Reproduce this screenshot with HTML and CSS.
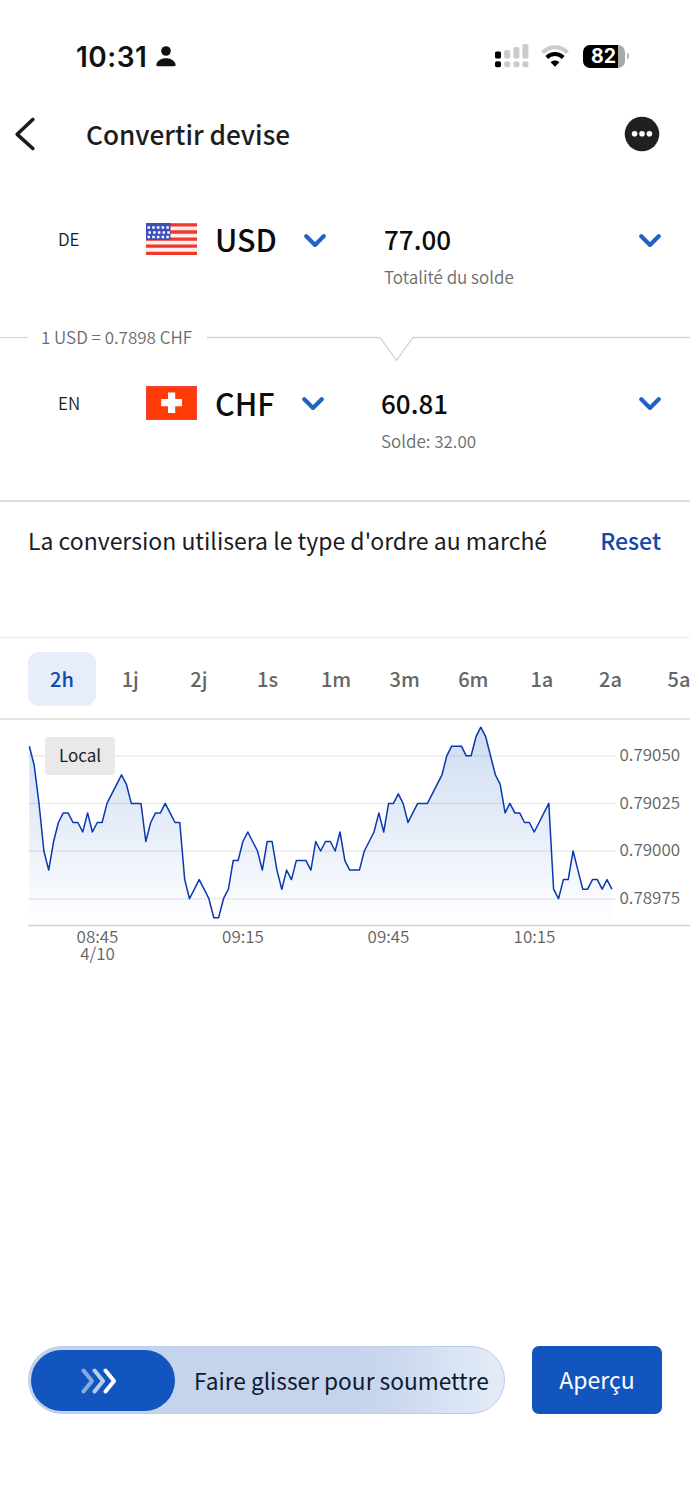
FILE: index.html
```html
<!DOCTYPE html>
<html lang="fr">
<head>
  <meta charset="UTF-8">
  <meta name="viewport" content="width=device-width, initial-scale=1.0">
  <title>Convertir devise</title>
  <link rel="stylesheet" href="styles.css">
</head>
<body>
  <div class="status-bar">
    <span class="time">10:31</span>
    <svg class="person" width="20" height="21" viewBox="0 0 20 21">
      <circle cx="10" cy="5" r="4.8"/>
      <path d="M.4 18.300C1 15 5 12.300 10 12.300s9 2.700 9.600 6c.2 1.200-.3 1.900-1.400 1.900H1.800C.7 20.200.2 19.500.4 18.300z"/>
    </svg>
    <svg class="signal" width="34" height="24" viewBox="0 0 34 24">
      <g fill="#000">
        <rect x="0" y="7.5" width="6" height="7" rx="1.6"/>
        <rect x="0" y="17.2" width="6" height="6" rx="1.8"/>
      </g>
      <g fill="#cbcbcb">
        <rect x="9.2" y="6" width="6" height="8.5" rx="1.6"/>
        <rect x="18.4" y="3" width="6" height="11.5" rx="1.6"/>
        <rect x="27.4" y="0" width="6" height="14.5" rx="1.6"/>
        <rect x="9.2" y="17.2" width="6" height="6" rx="2"/>
        <rect x="18.4" y="17.2" width="6" height="6" rx="2"/>
        <rect x="27.4" y="17.2" width="6" height="6" rx="2"/>
      </g>
    </svg>
    <svg class="wifi" width="28" height="22" viewBox="0 0 28 22">
      <path d="M1.5 7.6C8.5 .4 19.5 .4 26.5 7.6" fill="none" stroke="#cbcbcb" stroke-width="3.9"/>
      <path d="M5.800 12.500c4.600-4.600 11.800-4.600 16.400 0" fill="none" stroke="#000" stroke-width="4"/>
      <path d="M9.600 17.200c2.400-2.300 6.400-2.300 8.800 0L14 21.800z" fill="#000"/>
    </svg>
    <div class="battery"><span>82</span></div>
    <div class="battery-tip"></div>
  </div>

  <header class="top-bar">
    <svg class="back" width="22" height="34" viewBox="0 0 22 34">
      <path d="M18.800 2.500L3.200 17.300l15.600 14.200"/>
    </svg>
    <h1>Convertir devise</h1>
    <svg class="more" width="36" height="36" viewBox="0 0 36 36">
      <circle cx="18" cy="18" r="17.300" fill="#202022"/>
      <g fill="#fff">
        <circle cx="10.600" cy="17.800" r="2.800"/>
        <circle cx="18" cy="17.800" r="2.800"/>
        <circle cx="25.400" cy="17.800" r="2.800"/>
      </g>
    </svg>
  </header>

  <section class="currency from">
    <span class="side">DE</span>
    <svg class="flag" width="51" height="32" viewBox="0 0 51 32">
      <rect width="51" height="32" fill="#fdeeee"/>
      <path d="M0 1.800h51M0 9h51M0 16.200h51M0 23.200h51M0 30.400h51" stroke="#ee3a2b" stroke-width="3.300"/>
      <rect width="24.500" height="17" fill="#3c4fb8"/>
      <path d="M1.500 4.500H23M2.500 9.400H24M1.500 14H23" stroke="#fff" stroke-width="2.500" stroke-dasharray="2.500 2.200"/>
    </svg>
    <span class="code">USD</span>
    <svg class="chevron" width="22" height="14" viewBox="0 0 22 14"><path d="M2.300 2.300L11 10.900l8.700-8.600"/></svg>
    <div class="amount">
      <strong>77.00</strong>
      <span>Totalité du solde</span>
    </div>
    <svg class="chevron" width="22" height="14" viewBox="0 0 22 14"><path d="M2.300 2.300L11 10.900l8.700-8.600"/></svg>
  </section>

  <div class="rate">
    <span>1 USD = 0.7898 CHF</span>
    <svg width="483" height="26" viewBox="0 0 483 26">
      <path d="M0 1.500h173l16.500 22.800 16.500-22.800h277"/>
    </svg>
  </div>

  <section class="currency to">
    <span class="side">EN</span>
    <svg class="flag" width="51" height="34" viewBox="0 0 51 34">
      <rect x="0.500" y="0.500" width="50" height="33" fill="#ff3c08" stroke="#f4453c"/>
      <path d="M22 6.500h7.200v6.600H36v7.200h-6.800v6.600H22v-6.600H15.200v-7.200H22z" fill="#fff"/>
    </svg>
    <span class="code">CHF</span>
    <svg class="chevron" width="22" height="14" viewBox="0 0 22 14"><path d="M2.300 2.300L11 10.900l8.700-8.600"/></svg>
    <div class="amount">
      <strong>60.81</strong>
      <span>Solde: 32.00</span>
    </div>
    <svg class="chevron" width="22" height="14" viewBox="0 0 22 14"><path d="M2.300 2.300L11 10.900l8.700-8.600"/></svg>
  </section>

  <div class="order-type">
    <p>La conversion utilisera le type d'ordre au marché</p>
    <a class="reset">Reset</a>
  </div>

  <nav class="periods">
    <a class="active">2h</a>
    <a>1j</a>
    <a>2j</a>
    <a>1s</a>
    <a>1m</a>
    <a>3m</a>
    <a>6m</a>
    <a>1a</a>
    <a>2a</a>
    <a>5a</a>
  </nav>

  <div class="chart">
    <svg width="690" height="250" viewBox="0 0 690 250">
      <defs>
        <linearGradient id="fill" x1="0" y1="7" x2="0" y2="205" gradientUnits="userSpaceOnUse">
          <stop offset="0" stop-color="#1558c0" stop-opacity="0.210"/>
          <stop offset="1" stop-color="#1558c0" stop-opacity="0"/>
        </linearGradient>
      </defs>
      <path class="grid" d="M28 35.800h588M28 83.500h588M28 131.200h588M28 178.900h588"/>
      <path id="area" fill="url(#fill)"/>
      <path id="line"/>
      <path class="axis" d="M28 205.500h662"/>
      <g class="y-labels">
        <text x="619.500" y="41">0.79050</text>
        <text x="619.500" y="88.500">0.79025</text>
        <text x="619.500" y="136">0.79000</text>
        <text x="619.500" y="184">0.78975</text>
      </g>
      <g class="x-labels">
        <text x="97.500" y="223">08:45</text>
        <text x="97.500" y="240">4/10</text>
        <text x="243" y="223">09:15</text>
        <text x="388.500" y="223">09:45</text>
        <text x="534.500" y="223">10:15</text>
      </g>
    </svg>
    <span class="local">Local</span>
  </div>

  <footer class="actions">
    <div class="slider">
      <div class="knob">
        <svg width="36" height="26" viewBox="0 0 36 26">
          <path d="M2.500 2.500L11 13 2.500 23.500" opacity="0.500"/>
          <path d="M13.500 2.500L22 13l-8.500 10.500" opacity="0.700"/>
          <path d="M24.500 2.500L33 13l-8.500 10.500"/>
        </svg>
      </div>
      <span>Faire glisser pour soumettre</span>
    </div>
    <button class="preview">Aperçu</button>
  </footer>

  <script>
    // pas de 0.00005 au-dessus de 0.78975, un point par minute
    const cours = [
      16, 14, 10, 5, 3, 6, 8, 9, 9, 8, 8, 7, 9, 7, 8, 8, 10, 11, 12, 13,
      12, 10, 10, 10, 6, 8, 9, 9, 10, 9, 8, 8, 2, 0, 1, 2, 1, 0, -2, -2,
      0, 1, 4, 4, 6, 7, 6, 5, 3, 6, 6, 3, 1, 3, 2, 4, 4, 4, 3, 6,
      5, 6, 6, 5, 7, 4, 3, 3, 3, 5, 6, 7, 9, 7, 10, 10, 11, 10, 8, 9,
      10, 10, 10, 11, 12, 13, 15, 16, 16, 16, 15, 15, 17, 18, 17, 15, 13, 12, 9, 10,
      9, 9, 8, 8, 7, 8, 9, 10, 1, 0, 2, 2, 5, 3, 1, 1, 2, 2, 1, 2, 1
    ];
    const points = cours.map((v, i) => {
      const x = 29.300 + i * 4.855;
      const y = 178.700 - v * 9.530;
      return x.toFixed(1) + ' ' + y.toFixed(1);
    });
    const trace = 'M' + points.join('L');

    document.getElementById('line').setAttribute('d', trace);
    document.getElementById('area').setAttribute('d', trace + 'V205H29.300Z');
  </script>
</body>
</html>
```

FILE: styles.css
```css
* { box-sizing: border-box; }
body { margin: 0; width: 690px; height: 1500px; overflow: hidden; background: #fff; color: #1c1c1e; font-family: "Noto Sans CJK SC", "Noto Sans", sans-serif; display: flex; flex-direction: column; }
svg { display: block; flex: none; }
h1, p { margin: 0; font-weight: 400; }

.status-bar { height: 99px; padding: 13px 60px 0 76px; display: flex; align-items: center; font-family: Inter, sans-serif; color: #111; }
.time { width: 80px; font-size: 28px; font-weight: 600; line-height: 30px; letter-spacing: 0.5px; padding-top: 1px; }
.person { fill: #111; }
.signal { margin-left: 319px; }
.wifi { margin-left: 12px; }
.battery { margin-left: 14px; width: 42px; height: 23px; border-radius: 7px; background: linear-gradient(to right, #000 35px, #a9a9a9 35px); color: #fff; font-size: 19.500px; font-weight: 700; line-height: 23px; padding-left: 8px; }
.battery-tip { width: 2px; height: 6px; margin-left: 2px; border-radius: 0 3px 3px 0; background: #b5b5b5; }

.top-bar { height: 70px; padding: 0 30px 0 14px; display: flex; align-items: center; }
.back { fill: none; stroke: #1c1c1e; stroke-width: 3.6; stroke-linecap: round; stroke-linejoin: round; }
.top-bar h1 { flex: 1; margin-left: 50px; font-size: 26.200px; font-weight: 500; line-height: 36px; }

.currency { display: flex; padding: 0 29px 0 58px; }
.from { height: 167px; padding-top: 52px; }
.to { height: 138px; padding-top: 23px; }
.side { width: 88px; font-size: 17px; font-weight: 350; line-height: 36px; }
.from .flag { margin-top: 2px; }
.to .flag { margin-top: 1px; }
.code { width: 107px; padding-left: 18px; font-size: 30.500px; font-weight: 500; line-height: 36px; color: #0c0c0c; }
.to .code { width: 105px; }
.currency .chevron { margin-top: 12px; fill: none; stroke: #2262c4; stroke-width: 4.2; stroke-linecap: round; stroke-linejoin: round; }
.from .chevron { margin-top: 13px; }
.amount { flex: 1; margin-left: 58px; display: flex; flex-direction: column; }
.to .amount { margin-left: 57px; }
.amount strong { font-size: 26px; font-weight: 500; line-height: 36px; color: #0c0c0c; }
.amount span { font-size: 17px; font-weight: 350; line-height: 24px; margin-top: 8px; color: #6c6c6c; }

.rate { height: 26px; display: flex; }
.rate::before { content: ""; width: 28px; height: 1px; margin-top: 1px; background: #d5d5d5; }
.rate span { width: 179px; padding-left: 13px; font-size: 17px; font-weight: 350; line-height: 24px; margin-top: -11px; color: #6c6c6c; white-space: nowrap; }
.rate svg { fill: none; stroke: #d5d5d5; stroke-width: 1.300; }

.order-type { height: 137px; border-top: 2px solid #dcdcdc; padding: 20px 29px 0 28px; display: flex; justify-content: space-between; font-size: 23px; line-height: 36px; }
.order-type p { white-space: nowrap; }
.reset { color: #1048ae; font-weight: 500; }

.periods { height: 83px; border-top: 1px solid #ececec; border-bottom: 2px solid #e4e4e4; padding: 14px 0 0 28px; display: flex; }
.periods a { flex: none; width: 68.600px; height: 54px; text-align: center; font-size: 20px; font-weight: 500; line-height: 54px; color: #666; }
.periods .active { width: 68px; border-radius: 11px; background: #e7edfa; color: #1048ae; }

.chart { position: relative; height: 250px; }
.grid { stroke: #e8e8ea; stroke-width: 1.200; fill: none; }
#line { fill: none; stroke: #0a38ad; stroke-width: 1.500; stroke-linejoin: round; }
.axis { stroke: #d2d2d2; stroke-width: 1.500; }
.chart text { font-size: 17px; font-weight: 350; fill: #626262; }
.x-labels { text-anchor: middle; }
.local { position: absolute; left: 45px; top: 17px; width: 70px; height: 38px; border-radius: 4px; background: #e9e9e9; text-align: center; font-size: 17px; line-height: 36px; }

.actions { margin-top: 376px; padding: 0 28px; display: flex; justify-content: space-between; }
.slider { width: 477px; height: 68px; padding: 3px 2px; border: 1px solid #bccdec; border-radius: 34px; background: linear-gradient(to right, #c5d3ed 65%, #c8d6ee 75%, #e1eaf6 97%); display: flex; font-size: 22.700px; line-height: 62px; color: #0f1a2e; white-space: nowrap; }
.knob { flex: none; width: 144px; height: 61px; margin-right: 19px; border-radius: 31px; background: #1255bf; display: flex; align-items: center; padding-left: 50px; }
.knob svg { fill: none; stroke: #fff; stroke-width: 4; stroke-linecap: round; stroke-linejoin: round; }
.preview { width: 130px; height: 68px; border: 0; border-radius: 7px; background: #1255bf; color: #fff; font-family: inherit; font-size: 23px; line-height: 34px; padding: 0 0 2px; }
```
